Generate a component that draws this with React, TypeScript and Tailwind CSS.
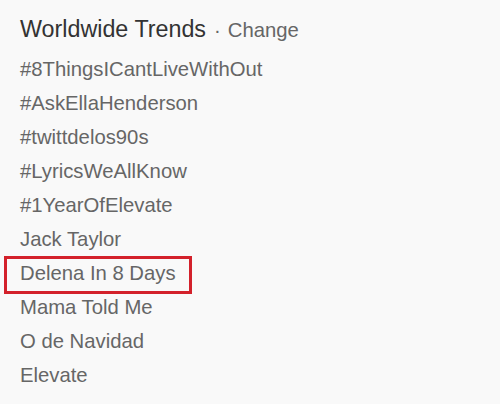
export default function App() {
  const items = [
    "#8ThingsICantLiveWithOut",
    "#AskEllaHenderson",
    "#twittdelos90s",
    "#LyricsWeAllKnow",
    "#1YearOfElevate",
    "Jack Taylor",
    "Delena In 8 Days",
    "Mama Told Me",
    "O de Navidad",
    "Elevate",
  ];
  return (
    <div
      className="w-[500px] h-[404px] bg-[#f9f9f9] pl-[20px] pt-[12px] overflow-hidden"
      style={{ fontFamily: '"Liberation Sans", Arial, sans-serif' }}
    >
      <div className="h-[34px] leading-[34px] whitespace-nowrap">
        <span className="text-[23.3px] text-[#333333]">Worldwide Trends</span>
        <span className="text-[20.3px] text-[#666666] ml-[8px]">·</span>
        <span className="text-[20.3px] text-[#666666] ml-[7px]">Change</span>
      </div>
      <ul className="mt-[6px] flex flex-col">
        {items.map((t, i) => (
          <li
            key={t}
            className="relative h-[34px] leading-[34px] text-[20.3px] text-[#666666] whitespace-nowrap"
          >
            {i === 6 && (
              <span className="absolute left-[-16px] top-0 w-[188px] h-[38px] border-[3px] border-[#d3212b]" />
            )}
            {t}
          </li>
        ))}
      </ul>
    </div>
  );
}
